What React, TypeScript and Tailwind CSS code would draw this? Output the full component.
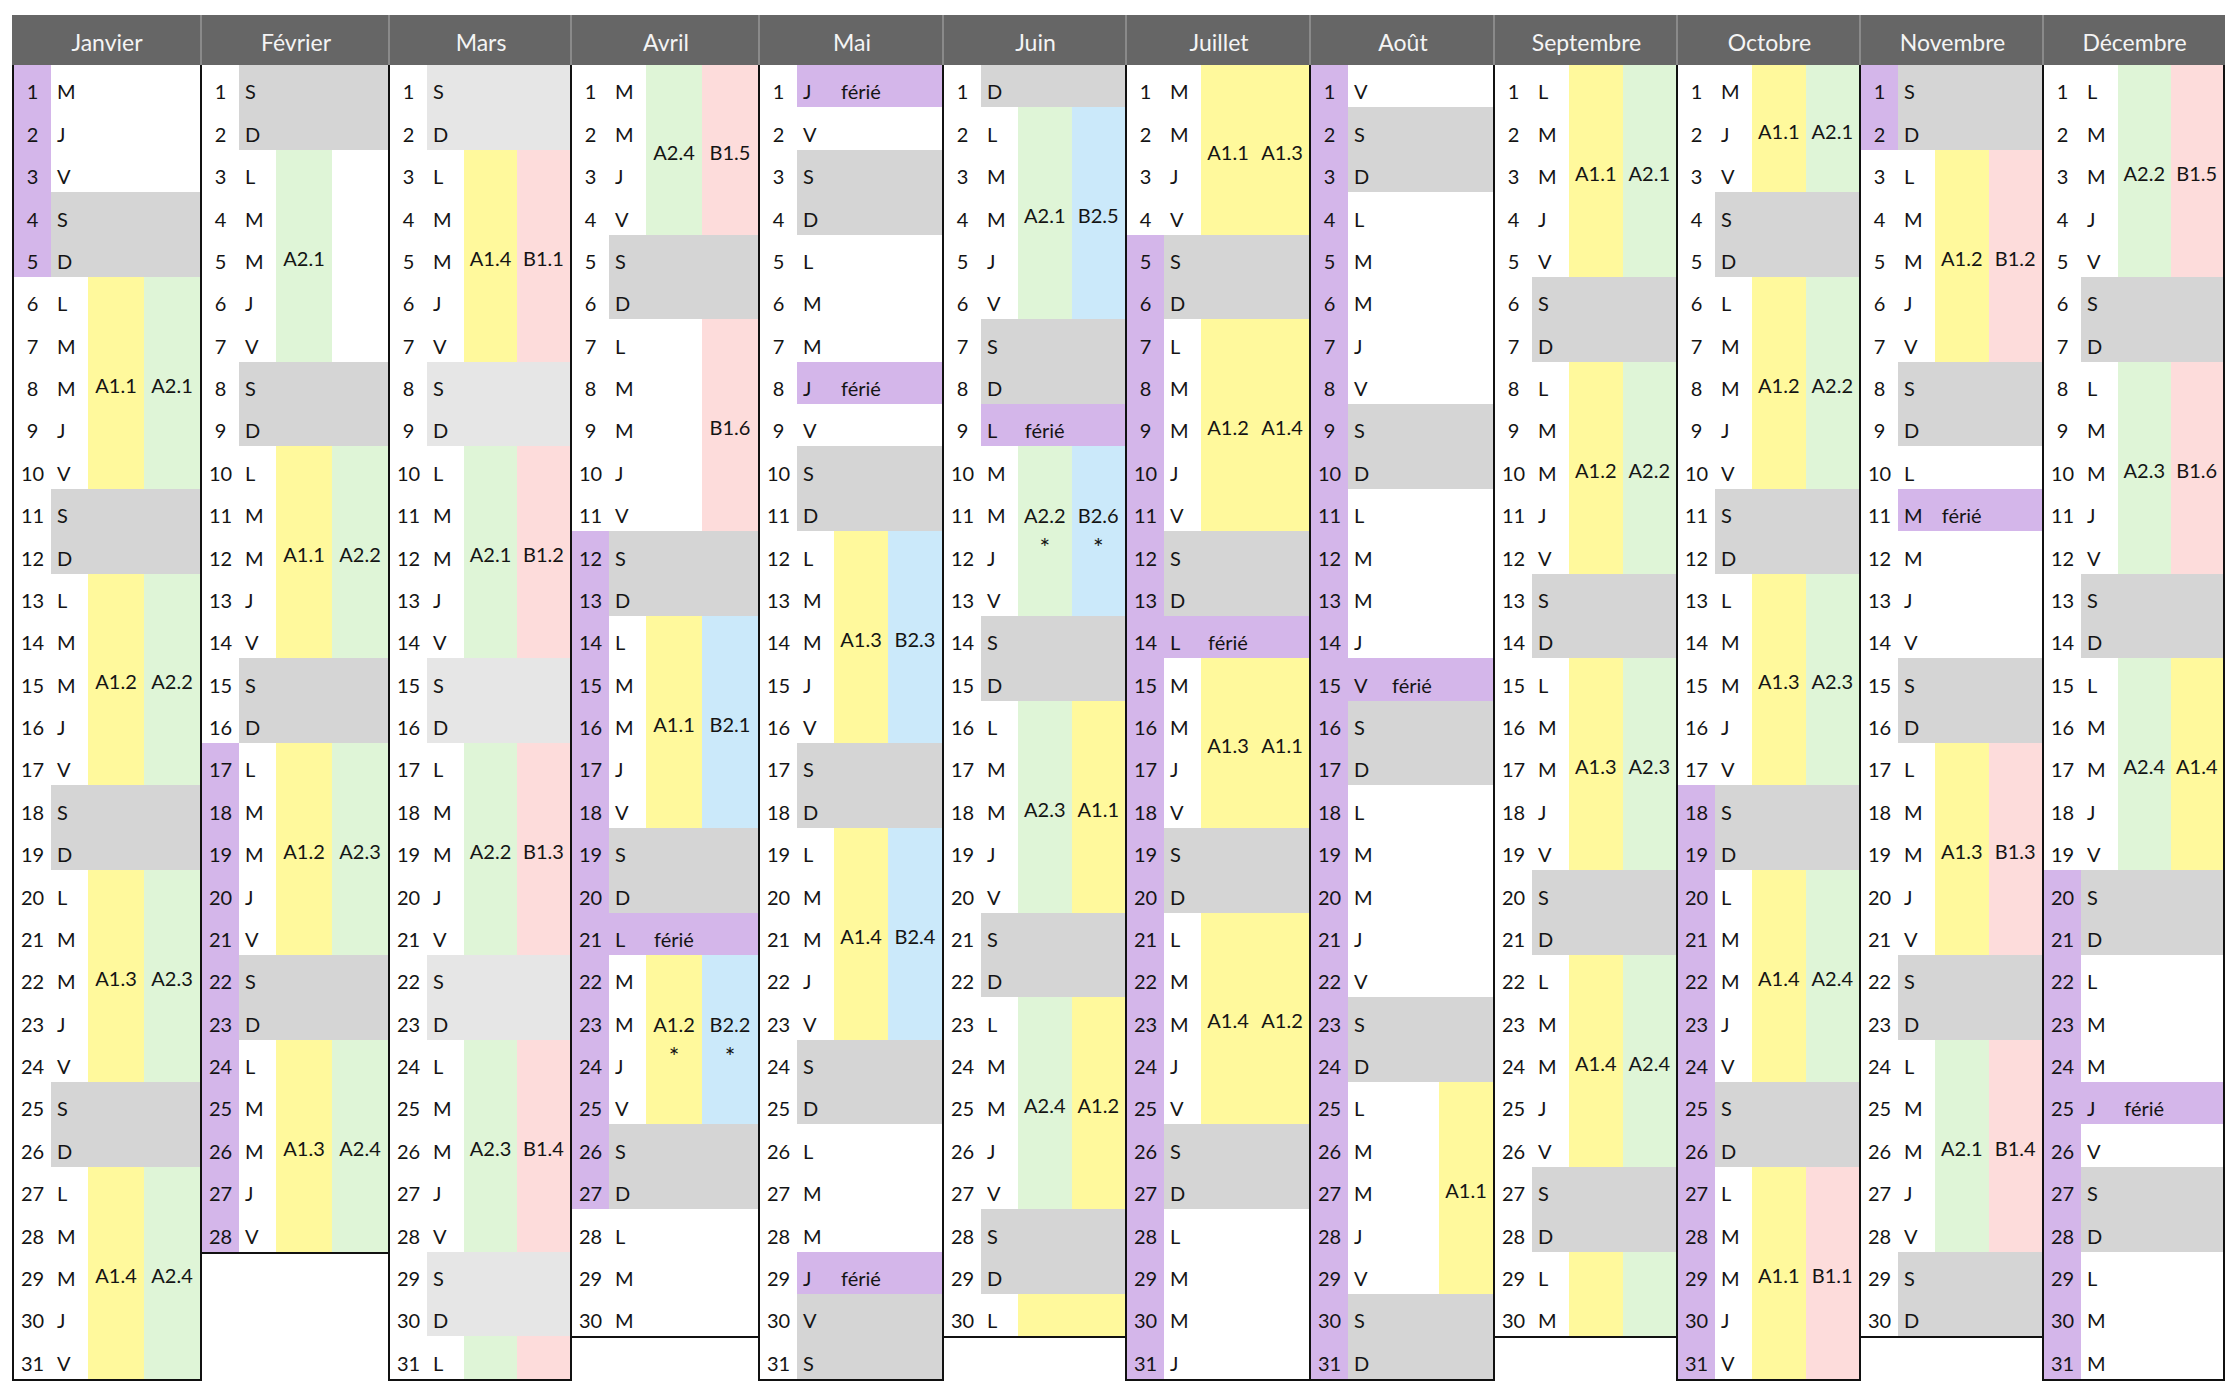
import React from 'react';

type ColorKey = 'Y' | 'G' | 'P' | 'B';
const COLORS: Record<ColorKey, string> = {
  Y: 'bg-[#fff99c]',
  G: 'bg-[#dff5d7]',
  P: 'bg-[#fddcdb]',
  B: 'bg-[#cbe9fa]',
};

type Block = [number, number, ColorKey, string?, boolean?];

interface Month {
  name: string;
  days: number;
  start: number; // 0 = lundi
  w: string;
  vac?: [number, number];
  feries?: number[];
  off?: number[];
  light?: boolean;
  a: Block[];
  b: Block[];
}

const LETTERS = ['L', 'M', 'M', 'J', 'V', 'S', 'D'];

const MONTHS: Month[] = [
  {
    name: 'Janvier', days: 31, start: 2, w: 'w-[190px]', vac: [1, 5],
    a: [[6, 10, 'Y', 'A1.1'], [13, 17, 'Y', 'A1.2'], [20, 24, 'Y', 'A1.3'], [27, 31, 'Y', 'A1.4']],
    b: [[6, 10, 'G', 'A2.1'], [13, 17, 'G', 'A2.2'], [20, 24, 'G', 'A2.3'], [27, 31, 'G', 'A2.4']],
  },
  {
    name: 'Février', days: 28, start: 5, w: 'w-[190px]', vac: [17, 28],
    a: [[3, 7, 'G', 'A2.1'], [10, 14, 'Y', 'A1.1'], [17, 21, 'Y', 'A1.2'], [24, 28, 'Y', 'A1.3']],
    b: [[10, 14, 'G', 'A2.2'], [17, 21, 'G', 'A2.3'], [24, 28, 'G', 'A2.4']],
  },
  {
    name: 'Mars', days: 31, start: 5, w: 'w-[184px]', light: true,
    a: [[3, 7, 'Y', 'A1.4'], [10, 14, 'G', 'A2.1'], [17, 21, 'G', 'A2.2'], [24, 28, 'G', 'A2.3'], [31, 31, 'G']],
    b: [[3, 7, 'P', 'B1.1'], [10, 14, 'P', 'B1.2'], [17, 21, 'P', 'B1.3'], [24, 28, 'P', 'B1.4'], [31, 31, 'P']],
  },
  {
    name: 'Avril', days: 30, start: 1, w: 'w-[190px]', vac: [12, 27], feries: [21],
    a: [[1, 4, 'G', 'A2.4'], [14, 18, 'Y', 'A1.1'], [22, 25, 'Y', 'A1.2', true]],
    b: [[1, 4, 'P', 'B1.5'], [7, 11, 'P', 'B1.6'], [14, 18, 'B', 'B2.1'], [22, 25, 'B', 'B2.2', true]],
  },
  {
    name: 'Mai', days: 31, start: 3, w: 'w-[186px]', feries: [1, 8, 29], off: [30],
    a: [[12, 16, 'Y', 'A1.3'], [19, 23, 'Y', 'A1.4']],
    b: [[12, 16, 'B', 'B2.3'], [19, 23, 'B', 'B2.4']],
  },
  {
    name: 'Juin', days: 30, start: 6, w: 'w-[185px]', feries: [9],
    a: [[2, 6, 'G', 'A2.1'], [10, 13, 'G', 'A2.2', true], [16, 20, 'G', 'A2.3'], [23, 27, 'G', 'A2.4'], [30, 30, 'Y']],
    b: [[2, 6, 'B', 'B2.5'], [10, 13, 'B', 'B2.6', true], [16, 20, 'Y', 'A1.1'], [23, 27, 'Y', 'A1.2'], [30, 30, 'Y']],
  },
  {
    name: 'Juillet', days: 31, start: 1, w: 'w-[186px]', vac: [5, 31], feries: [14],
    a: [[1, 4, 'Y', 'A1.1'], [7, 11, 'Y', 'A1.2'], [15, 18, 'Y', 'A1.3'], [21, 25, 'Y', 'A1.4']],
    b: [[1, 4, 'Y', 'A1.3'], [7, 11, 'Y', 'A1.4'], [15, 18, 'Y', 'A1.1'], [21, 25, 'Y', 'A1.2']],
  },
  {
    name: 'Août', days: 31, start: 4, w: 'w-[186px]', vac: [1, 31], feries: [15],
    a: [],
    b: [[25, 29, 'Y', 'A1.1']],
  },
  {
    name: 'Septembre', days: 30, start: 0, w: 'w-[185px]',
    a: [[1, 5, 'Y', 'A1.1'], [8, 12, 'Y', 'A1.2'], [15, 19, 'Y', 'A1.3'], [22, 26, 'Y', 'A1.4'], [29, 30, 'Y']],
    b: [[1, 5, 'G', 'A2.1'], [8, 12, 'G', 'A2.2'], [15, 19, 'G', 'A2.3'], [22, 26, 'G', 'A2.4'], [29, 30, 'G']],
  },
  {
    name: 'Octobre', days: 31, start: 2, w: 'w-[185px]', vac: [18, 31],
    a: [[1, 3, 'Y', 'A1.1'], [6, 10, 'Y', 'A1.2'], [13, 17, 'Y', 'A1.3'], [20, 24, 'Y', 'A1.4'], [27, 31, 'Y', 'A1.1']],
    b: [[1, 3, 'G', 'A2.1'], [6, 10, 'G', 'A2.2'], [13, 17, 'G', 'A2.3'], [20, 24, 'G', 'A2.4'], [27, 31, 'P', 'B1.1']],
  },
  {
    name: 'Novembre', days: 30, start: 5, w: 'w-[185px]', vac: [1, 2], feries: [11],
    a: [[3, 7, 'Y', 'A1.2'], [17, 21, 'Y', 'A1.3'], [24, 28, 'G', 'A2.1']],
    b: [[3, 7, 'P', 'B1.2'], [17, 21, 'P', 'B1.3'], [24, 28, 'P', 'B1.4']],
  },
  {
    name: 'Décembre', days: 31, start: 0, w: 'w-[183px]', vac: [20, 31], feries: [25],
    a: [[1, 5, 'G', 'A2.2'], [8, 12, 'G', 'A2.3'], [15, 19, 'G', 'A2.4']],
    b: [[1, 5, 'P', 'B1.5'], [8, 12, 'P', 'B1.6'], [15, 19, 'Y', 'A1.4']],
  },
];

function BlockCell({ block, col }: { block: Block; col: number }) {
  const [s, e, c, label, star] = block;
  return (
    <div
      style={{ gridRow: `${s} / ${e + 1}`, gridColumn: col }}
      className={`${COLORS[c]} flex flex-col items-center justify-center whitespace-nowrap`}
    >
      {label &&
        (star ? (
          <>
            <span className="block leading-none">{label}</span>
            <span className="block h-[20px] mt-[12px] leading-[20px] text-[25px]">*</span>
          </>
        ) : (
          <span className="leading-none pt-[4px]">{label}</span>
        ))}
    </div>
  );
}

function MonthColumn({ m, idx }: { m: Month; idx: number }) {
  const cells: React.ReactNode[] = [];
  const weekendBg = m.light ? 'bg-[#e6e6e6]' : 'bg-[#d5d5d5]';
  for (let d = 1; d <= m.days; d++) {
    const dow = (m.start + d - 1) % 7;
    const isVac = !!m.vac && d >= m.vac[0] && d <= m.vac[1];
    const isOff = dow >= 5 || (m.off ?? []).includes(d);
    const isFerie = (m.feries ?? []).includes(d);
    cells.push(
      <div
        key={`n${d}`}
        style={{ gridRow: d, gridColumn: 1 }}
        className={`flex items-end justify-center pb-[6px] leading-none ${isVac ? 'bg-[#d4b6ea]' : ''}`}
      >
        {d}
      </div>
    );
    if (isFerie) {
      cells.push(
        <div
          key={`l${d}`}
          style={{ gridRow: d, gridColumn: '2 / 5' }}
          className="grid grid-cols-[37px_1fr_1fr] bg-[#d4b6ea]"
        >
          <div className="flex items-end pl-[6px] pb-[6px] leading-none">{LETTERS[dow]}</div>
          <div className="flex items-end justify-center pb-[6px] leading-none">férié</div>
        </div>
      );
    } else if (isOff) {
      cells.push(
        <div
          key={`l${d}`}
          style={{ gridRow: d, gridColumn: '2 / 5' }}
          className={`flex items-end pl-[6px] pb-[6px] leading-none ${weekendBg}`}
        >
          {LETTERS[dow]}
        </div>
      );
    } else {
      cells.push(
        <div
          key={`l${d}`}
          style={{ gridRow: d, gridColumn: 2 }}
          className="flex items-end pl-[6px] pb-[6px] leading-none"
        >
          {LETTERS[dow]}
        </div>
      );
    }
  }
  m.a.forEach((b, i) => cells.push(<BlockCell key={`a${i}`} block={b} col={3} />));
  m.b.forEach((b, i) => cells.push(<BlockCell key={`b${i}`} block={b} col={4} />));

  return (
    <div className={`${m.w} shrink-0 flex flex-col ${idx > 0 ? '-ml-[2px]' : ''}`}>
      <div
        className={`h-[50px] bg-[#666666] flex items-center justify-center pt-[4px] text-[23px] text-[#f4f4f4] ${
          idx > 0 ? 'border-l-2 border-[#8a8a8a]' : ''
        }`}
      >
        {m.name}
      </div>
      <div className="grid grid-cols-[37px_37px_1fr_1fr] auto-rows-[42.39px] border-x-2 border-b-2 border-[#111111] bg-white">
        {cells}
      </div>
    </div>
  );
}

export default function App() {
  return (
    <div className="w-[2236px] h-[1400px] bg-white pt-[15px] pl-[12px] font-['Lato',sans-serif] text-[20px] text-[#141414] overflow-hidden">
      <div className="flex items-start">
        {MONTHS.map((m, i) => (
          <MonthColumn key={m.name} m={m} idx={i} />
        ))}
      </div>
    </div>
  );
}
